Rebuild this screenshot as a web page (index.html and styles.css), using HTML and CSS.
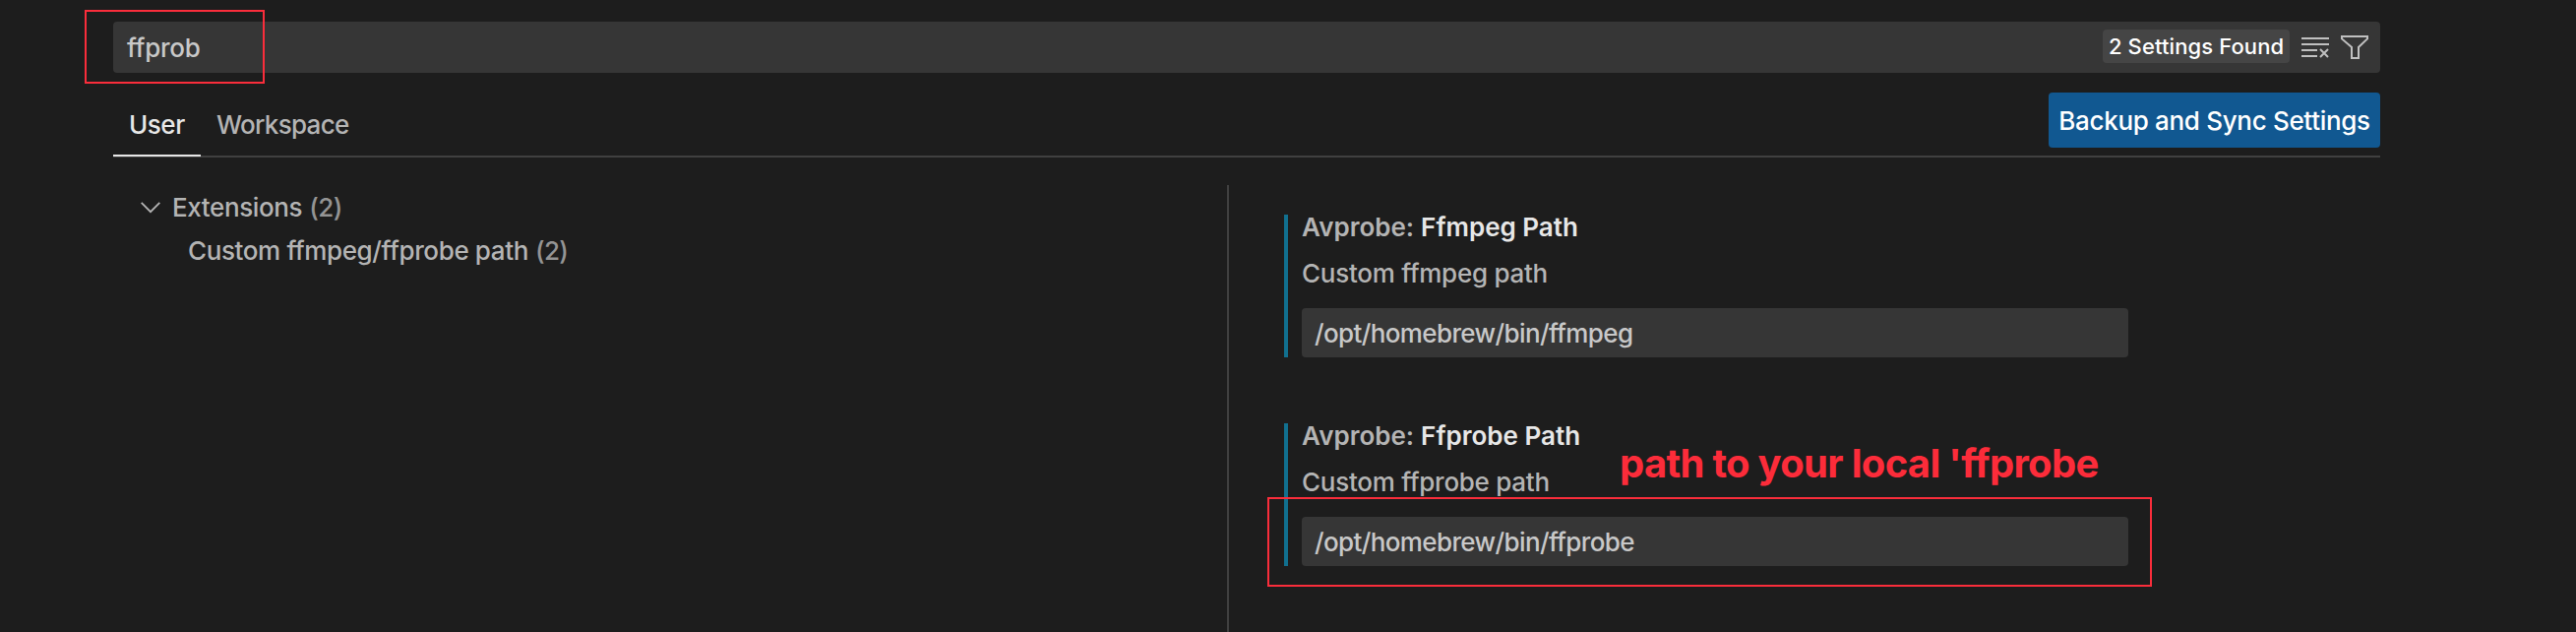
FILE: index.html
```html
<!DOCTYPE html>
<html lang="en">
<head>
<meta charset="utf-8">
<title>Settings</title>
<link rel="stylesheet" href="styles.css">
</head>
<body>
<main class="settings">
  <div class="search">
    <span class="search-text">ffprob</span>
    <span class="badge">2 Settings Found</span>
    <svg class="icon-clear" width="28" height="22" viewBox="0 0 28 22" fill="none" stroke="#c0c0c0" stroke-width="2"><path d="M0 2H28M0 8H28M0 14H16M0 20H16M19 13L27 21M27 13L19 21"/></svg>
    <svg class="icon-filter" width="28" height="24" viewBox="0 0 28 24" fill="none" stroke="#c0c0c0" stroke-width="2"><path d="M1 1H27V3.4L18 12V23H11V12L1 3.4Z"/></svg>
  </div>
  <header class="tabs">
    <span class="tab tab-active">User</span>
    <span class="tab">Workspace</span>
    <button class="sync">Backup and Sync Settings</button>
  </header>
  <div class="body">
    <nav class="tree">
      <div class="row">
        <svg class="chevron" width="20" height="12" viewBox="0 0 20 12" fill="none" stroke="#b4b4b4" stroke-width="1.8"><path d="M.7 .8L10 10.2L19.3 .8"/></svg>
        <span>Extensions</span><span class="count">(2)</span>
      </div>
      <div class="row row-child"><span>Custom ffmpeg/ffprobe path</span><span class="count">(2)</span></div>
    </nav>
    <section class="list">
      <article class="item">
        <h3 class="title"><span>Avprobe:</span><span class="label">Ffmpeg Path</span></h3>
        <p class="desc">Custom ffmpeg path</p>
        <div class="input">/opt/homebrew/bin/ffmpeg</div>
      </article>
      <article class="item">
        <h3 class="title"><span>Avprobe:</span><span class="label">Ffprobe Path</span></h3>
        <p class="desc">Custom ffprobe path</p>
        <div class="input">/opt/homebrew/bin/ffprobe</div>
      </article>
    </section>
  </div>
</main>
<div class="mark mark-search"></div>
<div class="mark mark-path"></div>
<div class="note">path to your local 'ffprobe</div>
</body>
</html>
```
FILE: styles.css
```css
* { box-sizing: border-box; }
body {
  margin: 0;
  width: 2618px;
  height: 642px;
  overflow: hidden;
  background: #1d1d1d;
  color: #b4b4b4;
  font: 450 26px/36px Inter, "Liberation Sans", sans-serif;
  font-feature-settings: "calt" 0;
  position: relative;
}
.settings { display: flex; flex-direction: column; height: 642px; padding: 22px 199px 0 115px; }
.search {
  display: flex;
  align-items: center;
  height: 52px;
  padding: 0 12px 0 14px;
  border-radius: 4px;
  background: #363636;
  color: #c8c8c8;
}
.search-text { flex: 1; padding-top: 2px; letter-spacing: -.25px; }
.badge {
  display: flex;
  align-items: center;
  width: 190px;
  height: 34px;
  padding-left: 6px;
  margin: 0 12px 2px 0;
  border-radius: 4px;
  background: #454545;
  color: #fff;
  font-size: 22px;
  letter-spacing: .1px;
  white-space: nowrap;
}
.icon-clear { margin-right: 12px; }
.tabs { display: flex; height: 86px; border-bottom: 2px solid #404040; }
.tab { height: 85px; padding: 35px 16px 0; letter-spacing: -.7px; }
.tab-active { width: 89px; border-bottom: 2px solid #e7e7e7; color: #e7e7e7; letter-spacing: -.45px; }
.sync {
  width: 337px;
  height: 56px;
  margin: 20px 0 0 auto;
  padding: 2px 0 0;
  border: 0;
  border-radius: 4px;
  background: #115891;
  color: #fff;
  font: inherit;
  letter-spacing: -.32px;
  white-space: nowrap;
}
.body { display: flex; flex: 1; }
.tree { width: 1132px; padding-top: 29px; letter-spacing: -.38px; }
.row { display: flex; align-items: center; height: 44px; padding-left: 28px; white-space: nowrap; }
.row-child { padding-left: 76px; }
.chevron { margin-right: 12px; }
.count { margin-left: 7px; color: #949494; letter-spacing: -.6px; }
.list { flex: 1; margin-top: 28px; padding: 30px 0 0 56px; border-left: 2px solid #404040; }
.item { width: 858px; height: 145px; margin-bottom: 67px; padding-left: 14px; border-left: 4px solid #11708f; }
.title { display: flex; gap: 7px; margin: 0; height: 45px; font-size: 26px; font-weight: 600; line-height: 26px; }
.label { color: #e7e7e7; }
.desc { margin: 0; height: 50px; line-height: 29px; letter-spacing: -.27px; }
.input { display: flex; align-items: center; height: 50px; padding: 2px 0 0 13px; border-radius: 4px; background: #363636; color: #c8c8c8; letter-spacing: -.62px; }
.mark { position: absolute; border: 2px solid #fa2d3b; }
.mark-search { left: 86px; top: 10px; width: 183px; height: 75px; }
.mark-path { left: 1288px; top: 505px; width: 899px; height: 91px; }
.note { position: absolute; left: 1646px; top: 447px; color: #fc2c3a; font-size: 40px; font-weight: 700; line-height: 48px; letter-spacing: -.7px; white-space: nowrap; }
```
